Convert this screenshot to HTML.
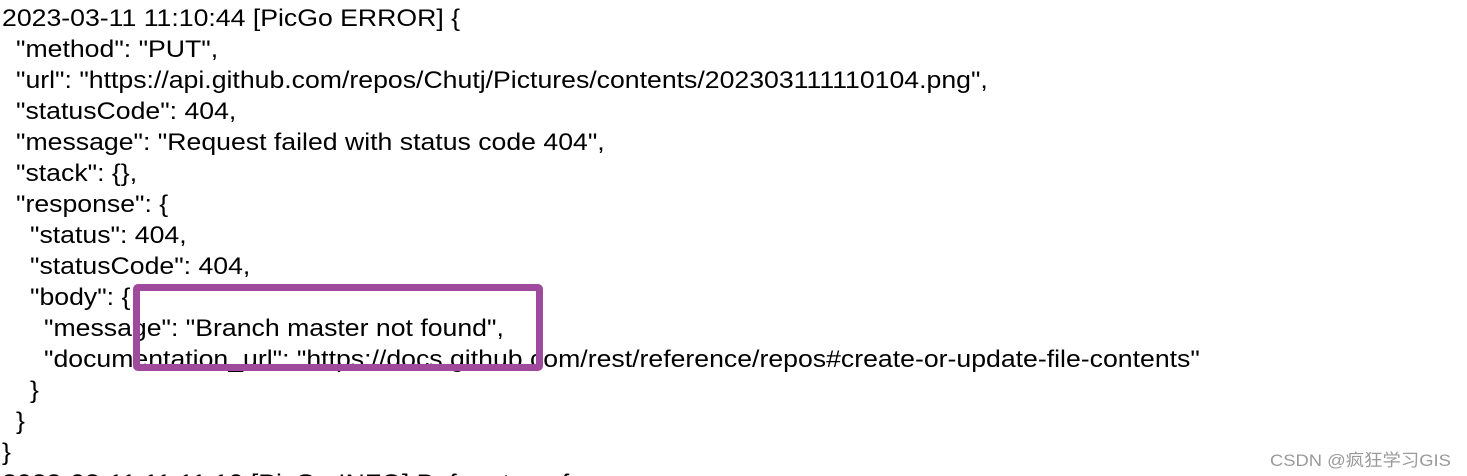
<!DOCTYPE html>
<html><head><meta charset="utf-8"><style>
html,body{margin:0;padding:0;background:#fff;width:1467px;height:476px;overflow:hidden;position:relative}
.l{position:absolute;left:0;white-space:pre;font-family:"Liberation Sans","Noto Sans CJK SC",sans-serif;font-size:24px;color:#000;line-height:31px;height:31px;transform:scaleX(1.11);transform-origin:0 0}
.box{position:absolute;left:133px;top:284px;width:396px;height:73px;border:7px solid #a04a9e;border-radius:5px}
.wm{position:absolute;left:1270px;top:446px;font-family:"Liberation Sans","Noto Sans CJK SC",sans-serif;font-size:17px;color:#9a9a9a;white-space:pre;transform:scaleX(1.08);transform-origin:0 0}
</style></head><body>
<div class="l" style="top:3px;left:2px">2023-03-11 11:10:44 [PicGo ERROR] {</div>
<div class="l" style="top:34px;left:16px">"method": "PUT",</div>
<div class="l" style="top:65px;left:16px">"url": "https://api.github.com/repos/Chutj/Pictures/contents/202303111110104.png",</div>
<div class="l" style="top:96px;left:16px">"statusCode": 404,</div>
<div class="l" style="top:127px;left:16px">"message": "Request failed with status code 404",</div>
<div class="l" style="top:158px;left:16px">"stack": {},</div>
<div class="l" style="top:189px;left:16px">"response": {</div>
<div class="l" style="top:220px;left:30px">"status": 404,</div>
<div class="l" style="top:251px;left:30px">"statusCode": 404,</div>
<div class="l" style="top:282px;left:30px">"body": {</div>
<div class="l" style="top:313px;left:44px">"message": "Branch master not found",</div>
<div class="l" style="top:344px;left:44px">"documentation_url": "https://docs.github.com/rest/reference/repos#create-or-update-file-contents"</div>
<div class="l" style="top:375px;left:30px">}</div>
<div class="l" style="top:406px;left:16px">}</div>
<div class="l" style="top:437px;left:2px">}</div>
<div class="l" style="top:468px;left:2px">2023-03-11 11:11:10 [PicGo INFO] Before transform</div>
<div class="box"></div>
<div class="wm">CSDN @疯狂学习GIS</div>
</body></html>
